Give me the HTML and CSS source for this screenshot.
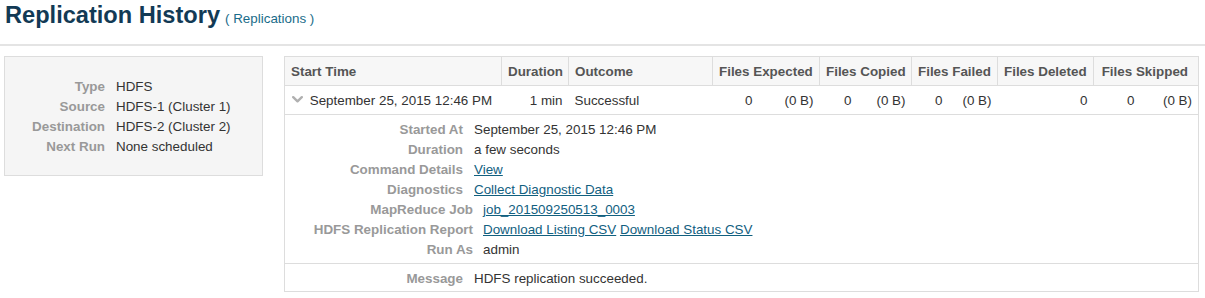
FILE: index.html
```html
<!DOCTYPE html>
<html lang="en">
<head>
  <meta charset="UTF-8">
  <title>Replication History</title>
  <link rel="stylesheet" href="styles.css">
</head>
<body>
  <div class="page-header">
    <h1>Replication History</h1>
    <a class="crumb" href="#">( Replications )</a>
  </div>

  <div class="main">
    <div class="summary">
      <div class="props summary-props">
        <span class="key">Type</span><span class="val">HDFS</span>
        <span class="key">Source</span><span class="val">HDFS-1 (Cluster 1)</span>
        <span class="key">Destination</span><span class="val">HDFS-2 (Cluster 2)</span>
        <span class="key">Next Run</span><span class="val">None scheduled</span>
      </div>
    </div>

    <table class="history">
      <colgroup>
        <col style="width: 217px">
        <col style="width: 67px">
        <col style="width: 144px">
        <col style="width: 46px"><col style="width: 61px">
        <col style="width: 38px"><col style="width: 54px">
        <col style="width: 37px"><col style="width: 49px">
        <col style="width: 96px">
        <col style="width: 47px"><col style="width: 58px">
      </colgroup>
      <thead>
        <tr>
          <th>Start Time</th>
          <th class="num">Duration</th>
          <th>Outcome</th>
          <th class="num" colspan="2">Files Expected</th>
          <th class="num" colspan="2">Files Copied</th>
          <th class="num" colspan="2">Files Failed</th>
          <th class="num">Files Deleted</th>
          <th class="num last" colspan="2">Files Skipped</th>
        </tr>
      </thead>
      <tbody>
        <tr class="run">
          <td class="start">
            <svg class="chevron" width="11" height="7" viewBox="0 0 11 7">
              <path d="M1.2 1.2 L5.5 5.3 L9.8 1.2" fill="none" stroke="#b0b0b0" stroke-width="2.4" stroke-linecap="round" stroke-linejoin="round"/>
            </svg>
            September 25, 2015 12:46 PM
          </td>
          <td class="num">1 min</td>
          <td>Successful</td>
          <td class="num">0</td><td class="num">(0 B)</td>
          <td class="num">0</td><td class="num">(0 B)</td>
          <td class="num">0</td><td class="num">(0 B)</td>
          <td class="num">0</td>
          <td class="num">0</td><td class="num">(0 B)</td>
        </tr>
        <tr class="details">
          <td colspan="12">
            <div class="props detail-props">
              <span class="key">Started At</span><span class="val">September 25, 2015 12:46 PM</span>
              <span class="key">Duration</span><span class="val">a few seconds</span>
              <span class="key">Command Details</span><span class="val"><a href="#">View</a></span>
              <span class="key">Diagnostics</span><span class="val"><a href="#">Collect Diagnostic Data</a></span>
            </div>
            <div class="props detail-props wide">
              <span class="key">MapReduce Job</span><span class="val"><a href="#">job_201509250513_0003</a></span>
              <span class="key">HDFS Replication Report</span><span class="val"><a href="#">Download Listing CSV</a> <a href="#">Download Status CSV</a></span>
              <span class="key">Run As</span><span class="val">admin</span>
            </div>
          </td>
        </tr>
        <tr class="message">
          <td colspan="12">
            <div class="props detail-props">
              <span class="key">Message</span><span class="val">HDFS replication succeeded.</span>
            </div>
          </td>
        </tr>
      </tbody>
    </table>
  </div>
</body>
</html>
```

FILE: styles.css
```css
body {
  margin: 0;
  font-family: "Liberation Sans", Arial, sans-serif;
  font-size: 13.4px;
  line-height: 20px;
  color: #333;
  background: #fff;
}
a {
  color: #11607f;
}
.page-header {
  display: flex;
  align-items: baseline;
  gap: 5px;
  height: 44px;
  padding: 0 5px;
  border-bottom: 2px solid #e4e4e4;
}
.page-header h1 {
  margin: 0;
  font-size: 23.6px;
  line-height: 30px;
  font-weight: bold;
  color: #123a55;
}
.crumb {
  color: #1a6c8a;
  text-decoration: none;
}
.main {
  display: flex;
  align-items: flex-start;
  gap: 21px;
  padding: 10px 0 0 4px;
}
.summary {
  width: 257px;
  padding: 20px 0 18px;
  background: #f5f5f5;
  border: 1px solid #ddd;
}
.props {
  display: grid;
  justify-content: start;
}
.props .key {
  text-align: right;
  font-weight: bold;
  color: #999;
  white-space: nowrap;
}
.props .val {
  white-space: nowrap;
}
.summary-props {
  grid-template-columns: 100px auto;
  column-gap: 11px;
}
.history {
  width: 914px;
  table-layout: fixed;
  border-collapse: collapse;
  border: 1px solid #ddd;
}
.history th,
.history td {
  padding: 4px 6px;
  height: 20px;
  text-align: left;
  white-space: nowrap;
}
.history th {
  font-weight: bold;
  color: #555;
  background: #f7f7f7;
  border: 1px solid #ddd;
  padding: 5px 8px 3px 6px;
}
.history th.last {
  padding-right: 10px;
}
.history .num {
  text-align: right;
}
.history .run td {
  border-bottom: 1px solid #ddd;
  padding-top: 5px;
  padding-bottom: 3px;
}
.history td.start {
  padding-left: 7px;
}
.chevron {
  margin-right: 3px;
  vertical-align: 2px;
}
.history .details td {
  padding: 5px 0 3px 0;
  border-bottom: 1px solid #ddd;
}
.history .message td {
  padding: 5px 0 2px 0;
}
.detail-props {
  grid-template-columns: 178px auto;
  column-gap: 11px;
}
.detail-props.wide {
  grid-template-columns: 188px auto;
  column-gap: 10px;
}
```
